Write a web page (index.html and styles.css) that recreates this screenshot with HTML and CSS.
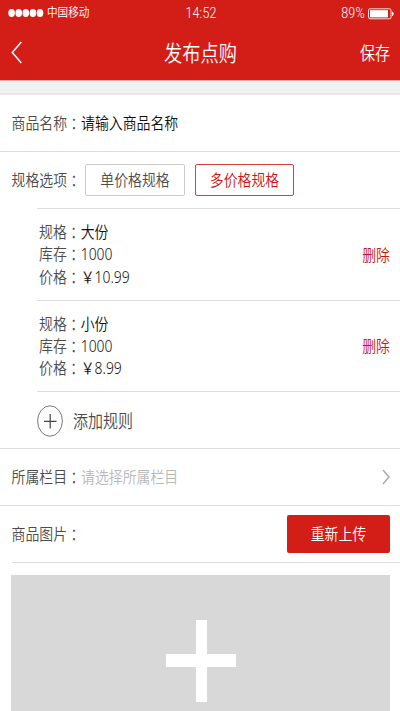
FILE: index.html
```html
<!DOCTYPE html>
<html lang="zh-CN">
<head>
<meta charset="utf-8">
<title>发布点购</title>
<link rel="stylesheet" href="styles.css">
</head>
<body>
<header class="header">
  <div class="status">
    <div class="carrier">
      <svg class="signal" width="36" height="10" viewBox="0 0 36 10" fill="#fff"><ellipse cx="3.6" cy="5" rx="3.3" ry="4"/><ellipse cx="10.7" cy="5" rx="3.3" ry="4"/><ellipse cx="17.8" cy="5" rx="3.3" ry="4"/><ellipse cx="24.9" cy="5" rx="3.3" ry="4"/><ellipse cx="32" cy="5" rx="3.3" ry="4"/></svg>
      <span class="t">中国移动</span>
    </div>
    <span class="t clock">14:52</span>
    <div class="power">
      <span class="t">89%</span>
      <svg width="26" height="12" viewBox="0 0 26 12"><rect x=".5" y=".8" width="22.5" height="10" rx="1.5" fill="none" stroke="#fff" stroke-opacity=".85"/><rect x="2" y="2.2" width="18" height="7.2" fill="#fff"/><path d="M24 3.5Q25.8 4.5 25.8 5.8T24 8.2Z" fill="#fff"/></svg>
    </div>
  </div>
  <nav class="nav">
    <svg class="back" width="12" height="23" viewBox="0 0 12 23" fill="none" stroke="#fff" stroke-width="1.5"><path d="M10.3 1 1.3 11.5l9 10.5"/></svg>
    <h1 class="t title">发布点购</h1>
    <span class="t save">保存</span>
  </nav>
</header>
<div class="gap"></div>
<main>
  <section class="row name">
    <span class="t">商品名称<i lang="zh-TW">：</i><b>请输入商品名称</b></span>
  </section>
  <section class="row options">
    <span class="t label">规格选项<i lang="zh-TW">：</i></span>
    <button class="choice"><span class="t">单价格规格</span></button>
    <button class="choice active"><span class="t">多价格规格</span></button>
  </section>
  <section class="specs">
    <article class="spec">
      <div class="lines">
        <span class="t">规格<i lang="zh-TW">：</i><b>大份</b></span>
        <span class="t">库存<i lang="zh-TW">：</i><b>1000</b></span>
        <span class="t">价格<i lang="zh-TW">：</i><b>￥10.99</b></span>
      </div>
      <span class="t delete">删除</span>
    </article>
    <article class="spec">
      <div class="lines">
        <span class="t">规格<i lang="zh-TW">：</i><b>小份</b></span>
        <span class="t">库存<i lang="zh-TW">：</i><b>1000</b></span>
        <span class="t">价格<i lang="zh-TW">：</i><b>￥8.99</b></span>
      </div>
      <span class="t delete">删除</span>
    </article>
    <div class="add">
      <svg width="26" height="32" viewBox="0 0 26 32" fill="none" stroke="#777"><ellipse cx="13" cy="16" rx="12.4" ry="15.2"/><path d="M7 16.3h12.5M13.2 9v14.5" stroke="#444" stroke-width="1.2"/></svg>
      <span class="t">添加规则</span>
    </div>
  </section>
  <section class="row category">
    <span class="t">所属栏目<i lang="zh-TW">：</i><em>请选择所属栏目</em></span>
    <svg width="8" height="16" viewBox="0 0 8 16" fill="none" stroke="#aaa" stroke-width="1.5"><path d="M1 1l6 7-6 7"/></svg>
  </section>
  <section class="row picture">
    <span class="t">商品图片<i lang="zh-TW">：</i></span>
    <button class="upload"><span class="t">重新上传</span></button>
  </section>
  <div class="preview">
    <svg width="70" height="82" viewBox="0 0 70 82" fill="#fff"><path d="M30 0h11v34h29v13H41v35H30V47H0V34h30z"/></svg>
  </div>
</main>
</body>
</html>
```
FILE: styles.css
```css
* { box-sizing: border-box; }
html, body { height: 711px; overflow: hidden; }
body {
  margin: 0;
  background: #fff;
  color: #4c4c4c;
  font: 350 13.9px/20px "Noto Sans", "Noto Sans CJK SC", sans-serif;
}
svg { display: block; flex: none; }
/* Tall, condensed lettering */
.t { display: block; white-space: nowrap; transform: scaleY(1.18); }
i { font-family: "Noto Sans CJK TC", sans-serif; font-style: normal; vertical-align: -1px; line-height: 1; }
b { color: #111; font-weight: 350; }
em { color: #b8b8b8; font-style: normal; }
button { margin: 0; padding: 0; font: inherit; color: inherit; }

.header { height: 81px; background: #d31e18; color: #fff; border-bottom: 1px solid #e9a9a6; }
.status {
  display: grid;
  grid-template-columns: 1fr auto 1fr;
  align-items: center;
  height: 25px;
  padding: 0 6px 0 8px;
  font-size: 10.6px;
}
.carrier, .power { display: flex; align-items: center; }
.carrier { gap: 3px; }
.carrier .t { margin-top: -1px; }
.power { justify-content: flex-end; gap: 3px; padding-top: 2px; font: 300 12.4px/20px Roboto, sans-serif; }
.power .t { margin-top: -2px; letter-spacing: .3px; }
.clock { font: 300 12.4px/20px Roboto, sans-serif; letter-spacing: .2px; }
.nav {
  display: grid;
  grid-template-columns: 1fr auto 1fr;
  align-items: center;
  height: 55px;
  padding: 0 10px 0 11px;
}
.title { margin: 0; font-size: 18.2px; font-weight: 350; }
.save { justify-self: end; font-size: 15px; padding-top: 1px; }
.gap { height: 14px; background: #f2f2f2; border-bottom: 2px solid #e8e8e8; }

.row { display: flex; align-items: center; height: 57px; padding: 0 10px 0 11.5px; border-bottom: 1px solid #ddd; }
.options { border-bottom: 0; height: 56px; }
.label { width: 73.5px; }
.choice {
  display: flex;
  align-items: center;
  justify-content: center;
  width: 100px;
  height: 32px;
  margin-right: 10px;
  border: 1px solid #ccc;
  border-radius: 2px;
  background: #fff;
}
.choice.active { width: 99px; border-color: #d6403c; color: #c91713; }
.specs { padding-left: 37px; border-bottom: 1px solid #ddd; }
.spec {
  display: flex;
  align-items: center;
  justify-content: space-between;
  height: 92px;
  padding: 0 10px 0 2px;
  border-top: 1px solid #ddd;
}
.spec + .spec { height: 91px; }
.lines { display: grid; grid-auto-rows: 22.3px; align-items: center; }
.delete { color: #c91713; }
.add {
  display: flex;
  align-items: center;
  gap: 10px;
  height: 57px;
  padding-top: 2px;
  border-top: 1px solid #ddd;
  font-size: 15px;
}
.category { justify-content: space-between; }
.picture {
  justify-content: space-between;
  padding-left: 0;
  margin-left: 11.5px;
}
.upload {
  display: flex;
  align-items: center;
  justify-content: center;
  width: 103px;
  height: 38px;
  border: 0;
  border-radius: 2px;
  background: #d31e18;
  color: #fff;
}
.preview {
  display: flex;
  justify-content: center;
  height: 136px;
  margin: 12px 10px 0 11px;
  padding-top: 45px;
  background: #d8d8d8;
}
```
